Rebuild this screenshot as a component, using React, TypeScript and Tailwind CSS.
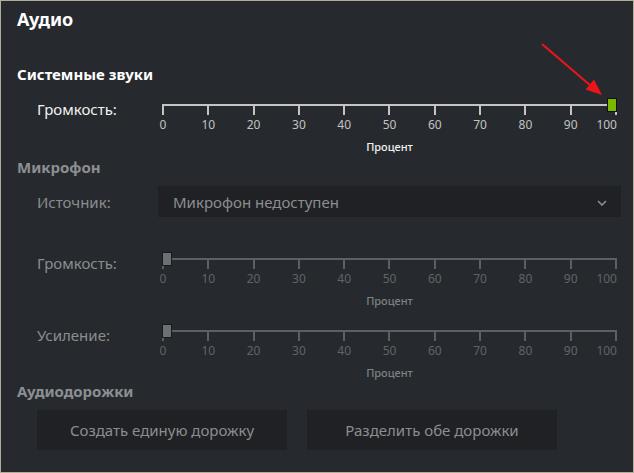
import React from "react";

const TICKS = [0, 10, 20, 30, 40, 50, 60, 70, 80, 90, 100];

function Slider({ enabled, value }: { enabled: boolean; value: number }) {
  const line = enabled ? "bg-[#c4c4c4]" : "bg-[#5c6064]";
  const label = enabled ? "text-[#c2c2c2]" : "text-[#5f6468]";
  const caption = enabled ? "text-[#f2f2f2]" : "text-[#7d8185]";
  const pos = (value / 100) * 445;
  return (
    <div className="relative w-[455px] pt-[8px]">
      <div className={`h-[2px] w-full ${line}`} />
      <div className="flex justify-between">
        {TICKS.map((t) => (
          <div key={t} className={`h-[9px] w-[2px] ${line}`} />
        ))}
      </div>
      <div className="flex justify-between h-[14px] mt-[3px]">
        {TICKS.map((t, i) => (
          <div
            key={t}
            className={`w-[2px] flex ${
              i === TICKS.length - 1 ? "justify-end" : "justify-center"
            }`}
          >
            <span
              className={`text-[12px] leading-[14px] whitespace-nowrap ${label}`}
            >
              {t}
            </span>
          </div>
        ))}
      </div>
      <div
        className={`text-center text-[11px] leading-[14px] mt-[8px] font-medium ${caption}`}
      >
        Процент
      </div>
      <div
        className={`absolute top-[2px] w-[10px] h-[14px] border ${
          enabled
            ? "bg-[#7ab800] border-[#111]"
            : "bg-[#6c7074] border-[#1a1b1d]"
        }`}
        style={{ left: pos }}
      />
    </div>
  );
}

function SliderRow({
  label,
  enabled,
  value,
  className,
}: {
  label: string;
  enabled: boolean;
  value: number;
  className: string;
}) {
  return (
    <div className={`flex ${className}`}>
      <div
        className={`w-[145px] shrink-0 pl-[20px] text-[15px] leading-[26px] ${
          enabled ? "text-[#f2f2f2]" : "text-[#8b8e91]"
        }`}
      >
        {label}
      </div>
      <Slider enabled={enabled} value={value} />
    </div>
  );
}

export default function App() {
  return (
    <div className="relative w-[634px] h-[473px] overflow-hidden bg-[#262a2e] border border-[#b3ad95] font-['Noto_Sans',sans-serif]">
      <div className="pl-[16px]">
        <div className="h-[36px] flex items-center text-[18px] font-bold text-white">
          Аудио
        </div>
        <div className="mt-[27px] h-[20px] flex items-center text-[15px] font-bold text-white">
          Системные звуки
        </div>
        <SliderRow label="Громкость:" enabled value={100} className="mt-[12px]" />

        <div className="mt-[3px] h-[20px] flex items-center text-[15px] font-bold text-[#8c8f92]">
          Микрофон
        </div>
        <div className="mt-[9px] flex h-[31px]">
          <div className="w-[141px] shrink-0 pl-[20px] pt-[2px] text-[15px] flex items-center text-[#8b8e91]">
            Источник:
          </div>
          <div className="w-[463px] bg-[#1f2124] flex items-center justify-between pl-[15px] pr-[14px] pt-[2px]">
            <span className="text-[15px] text-[#8b8e91]">Микрофон недоступен</span>
            <svg width="10" height="6" viewBox="0 0 10 6" fill="none">
              <path d="M1 1l4 4 4-4" stroke="#8b8e91" strokeWidth="1.6" />
            </svg>
          </div>
        </div>

        <SliderRow label="Громкость:" enabled={false} value={0} className="mt-[33px]" />
        <SliderRow label="Усиление:" enabled={false} value={0} className="mt-[14px]" />

        <div className="mt-[1px] h-[20px] flex items-center text-[15px] font-bold text-[#8c8f92]">
          Аудиодорожки
        </div>
        <div className="mt-[9px] flex gap-[20px] pl-[20px]">
          <div className="w-[250px] h-[40px] bg-[#1f2124] flex items-center justify-center text-[15px] text-[#8b8e91]">
            Создать единую дорожку
          </div>
          <div className="w-[250px] h-[40px] bg-[#1f2124] flex items-center justify-center text-[15px] text-[#8b8e91]">
            Разделить обе дорожки
          </div>
        </div>
      </div>

      {/* red pointer arrow */}
      <svg
        className="absolute left-0 top-0 pointer-events-none"
        width="634"
        height="473"
        viewBox="0 0 634 473"
      >
        <line x1="541" y1="43" x2="590" y2="85" stroke="#e8151b" strokeWidth="2.2" />
        <polygon points="601,94 584.5,88.5 593,78.5" fill="#e8151b" />
      </svg>
    </div>
  );
}
